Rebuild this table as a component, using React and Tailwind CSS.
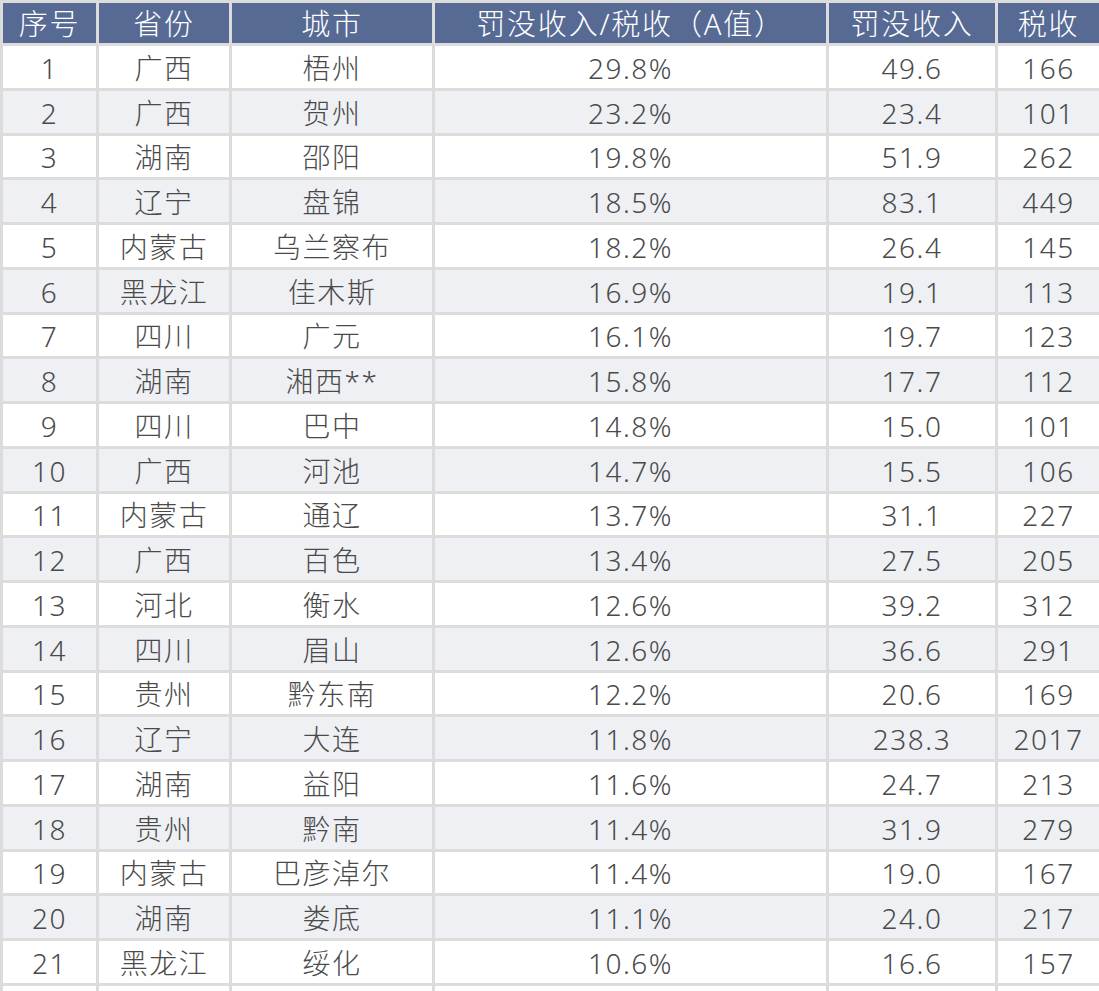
import React from 'react';

// 数据：序号、省份、城市、A值、罚没收入、税收
const rows = [
  ['1', '广西', '梧州', '29.8%', '49.6', '166'],
  ['2', '广西', '贺州', '23.2%', '23.4', '101'],
  ['3', '湖南', '邵阳', '19.8%', '51.9', '262'],
  ['4', '辽宁', '盘锦', '18.5%', '83.1', '449'],
  ['5', '内蒙古', '乌兰察布', '18.2%', '26.4', '145'],
  ['6', '黑龙江', '佳木斯', '16.9%', '19.1', '113'],
  ['7', '四川', '广元', '16.1%', '19.7', '123'],
  ['8', '湖南', '湘西**', '15.8%', '17.7', '112'],
  ['9', '四川', '巴中', '14.8%', '15.0', '101'],
  ['10', '广西', '河池', '14.7%', '15.5', '106'],
  ['11', '内蒙古', '通辽', '13.7%', '31.1', '227'],
  ['12', '广西', '百色', '13.4%', '27.5', '205'],
  ['13', '河北', '衡水', '12.6%', '39.2', '312'],
  ['14', '四川', '眉山', '12.6%', '36.6', '291'],
  ['15', '贵州', '黔东南', '12.2%', '20.6', '169'],
  ['16', '辽宁', '大连', '11.8%', '238.3', '2017'],
  ['17', '湖南', '益阳', '11.6%', '24.7', '213'],
  ['18', '贵州', '黔南', '11.4%', '31.9', '279'],
  ['19', '内蒙古', '巴彦淖尔', '11.4%', '19.0', '167'],
  ['20', '湖南', '娄底', '11.1%', '24.0', '217'],
  ['21', '黑龙江', '绥化', '10.6%', '16.6', '157'],
];

const headers = ['序号', '省份', '城市', '罚没收入/税收（A值）', '罚没收入', '税收'];

export default function App() {
  return (
    <div className="w-[1099px] h-[991px] overflow-hidden bg-white">
      <div
        className="grid grid-cols-[93px_130px_200px_391px_166px_101px] gap-[3px] bg-[#dcdcdc] pl-[3px] pt-[3px] w-max text-[28px] leading-none tracking-[1.5px] font-light"
        style={{ fontFamily: '"Noto Sans", "Noto Sans CJK SC", sans-serif' }}
      >
        {headers.map((h) => (
          <div key={h} className="h-[40px] bg-[#566a94] text-white text-[29px] tracking-[1.8px] flex items-center justify-center whitespace-nowrap">
            {h}
          </div>
        ))}
        {rows.map((r, i) =>
          r.map((cell, j) => (
            <div
              key={`${i}-${j}`}
              className={`h-[41.76px] pt-[2px] flex items-center justify-center text-[#4a4a4a] whitespace-nowrap ${i % 2 === 0 ? 'bg-white' : 'bg-[#eef0f4]'}`}
            >
              {cell}
            </div>
          ))
        )}
        {headers.map((h) => (
          <div key={`end-${h}`} className="h-[41.76px] bg-white" />
        ))}
      </div>
    </div>
  );
}
